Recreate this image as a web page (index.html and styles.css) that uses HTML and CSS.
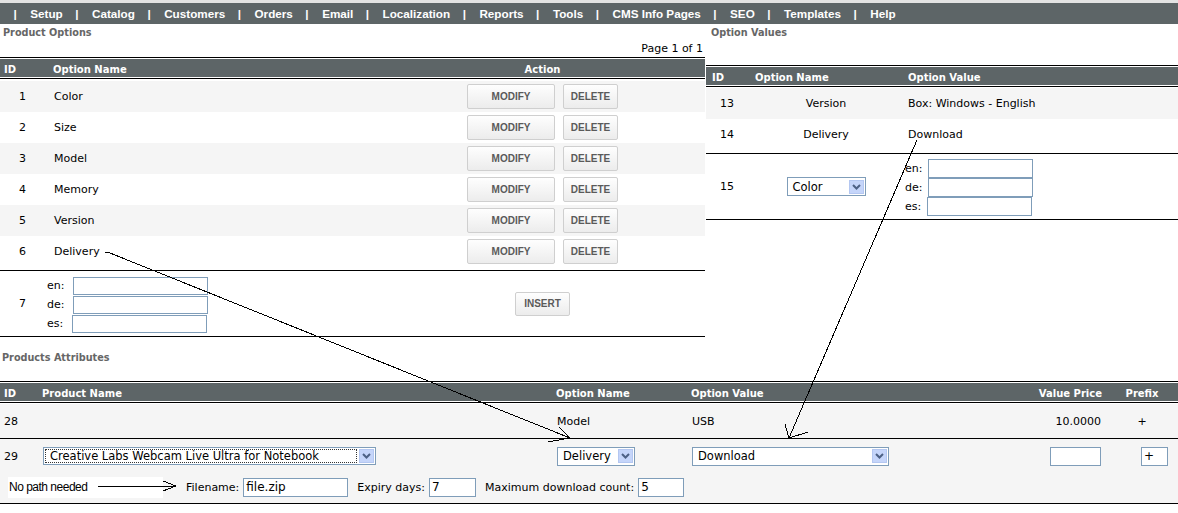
FILE: index.html
```html
<!DOCTYPE html>
<html>
<head>
<meta charset="utf-8">
<title>Product Options</title>
<link rel="stylesheet" href="styles.css">
</head>
<body>
<div class="page">
  <nav class="nav">
    <span class="sep">|</span><span class="item">Setup</span>
    <span class="sep">|</span><span class="item">Catalog</span>
    <span class="sep">|</span><span class="item">Customers</span>
    <span class="sep">|</span><span class="item">Orders</span>
    <span class="sep">|</span><span class="item">Email</span>
    <span class="sep">|</span><span class="item">Localization</span>
    <span class="sep">|</span><span class="item">Reports</span>
    <span class="sep">|</span><span class="item">Tools</span>
    <span class="sep">|</span><span class="item">CMS Info Pages</span>
    <span class="sep">|</span><span class="item">SEO</span>
    <span class="sep">|</span><span class="item">Templates</span>
    <span class="sep">|</span><span class="item">Help</span>
  </nav>

  <div class="main">
    <section class="left">
      <h2 class="title title-left">Product Options</h2>
      <div class="pager">Page 1 of 1</div>
      <div class="thead opt-grid">
        <span class="h-id">ID</span>
        <span class="h-name">Option Name</span>
        <span class="h-act">Action</span>
      </div>
      <div class="rows rows-left">
        <div class="row opt-grid alt"><span class="d-id">1</span><span class="d-name">Color</span><span class="d-act"><button class="btn btn-mod">MODIFY</button><button class="btn btn-del">DELETE</button></span></div>
        <div class="row opt-grid"><span class="d-id">2</span><span class="d-name">Size</span><span class="d-act"><button class="btn btn-mod">MODIFY</button><button class="btn btn-del">DELETE</button></span></div>
        <div class="row opt-grid alt"><span class="d-id">3</span><span class="d-name">Model</span><span class="d-act"><button class="btn btn-mod">MODIFY</button><button class="btn btn-del">DELETE</button></span></div>
        <div class="row opt-grid"><span class="d-id">4</span><span class="d-name">Memory</span><span class="d-act"><button class="btn btn-mod">MODIFY</button><button class="btn btn-del">DELETE</button></span></div>
        <div class="row opt-grid alt"><span class="d-id">5</span><span class="d-name">Version</span><span class="d-act"><button class="btn btn-mod">MODIFY</button><button class="btn btn-del">DELETE</button></span></div>
        <div class="row opt-grid"><span class="d-id">6</span><span class="d-name">Delivery</span><span class="d-act"><button class="btn btn-mod">MODIFY</button><button class="btn btn-del">DELETE</button></span></div>
      </div>
      <div class="newrow opt-grid">
        <span class="d-id">7</span>
        <div class="langs langs-left">
          <div class="lang"><span>en:</span><input class="in in-opt" type="text"></div>
          <div class="lang"><span>de:</span><input class="in in-opt" type="text"></div>
          <div class="lang"><span>es:</span><input class="in in-opt" type="text"></div>
        </div>
        <span class="d-act"><button class="btn btn-ins">INSERT</button></span>
      </div>
    </section>

    <section class="right">
      <h2 class="title title-right">Option Values</h2>
      <div class="thead val-grid">
        <span class="vh-id">ID</span>
        <span class="vh-name">Option Name</span>
        <span class="vh-val">Option Value</span>
      </div>
      <div class="rows rows-right">
        <div class="row val-grid alt"><span class="vd-id">13</span><span class="vd-name">Version</span><span class="vd-val">Box: Windows - English</span></div>
        <div class="row val-grid"><span class="vd-id">14</span><span class="vd-name">Delivery</span><span class="vd-val">Download</span></div>
      </div>
      <div class="newrow newrow-right val-grid">
        <span class="vd-id">15</span>
        <span class="vd-name"><span class="sel sel-color"><span class="sel-text">Color</span><span class="arr"><svg width="15" height="14" viewBox="0 0 15 14"><rect x="0.5" y="0.5" width="14" height="13" fill="#c5d5fa" stroke="#b4c7f1"/><polyline points="4,5 7.5,8.5 11,5" fill="none" stroke="#4d6185" stroke-width="2"/></svg></span></span></span>
        <div class="langs langs-right">
          <div class="lang"><span>en:</span><input class="in in-val" type="text"></div>
          <div class="lang"><span>de:</span><input class="in in-val" type="text"></div>
          <div class="lang"><span>es:</span><input class="in in-val" type="text"></div>
        </div>
      </div>
    </section>
  </div>

  <section class="attrs">
    <h2 class="title title-attrs">Products Attributes</h2>
    <div class="thead attr-grid">
      <span class="ah-l">ID</span>
      <span class="ah-l">Product Name</span>
      <span class="ah-l">Option Name</span>
      <span class="ah-l">Option Value</span>
      <span class="ah-r">Value Price</span>
      <span class="ah-c">Prefix</span>
    </div>
    <div class="arow arow-28 attr-grid">
      <span class="ad-id">28</span>
      <span class="ad-l"></span>
      <span class="ad-l">Model</span>
      <span class="ad-l">USB</span>
      <span class="ad-r">10.0000</span>
      <span class="ad-c">+</span>
    </div>
    <div class="arow arow-29">
      <div class="line1 attr-grid">
        <span class="ad-id">29</span>
        <span class="ad-l"><span class="sel sel-prod"><span class="focus">Creative Labs Webcam Live Ultra for Notebook</span><span class="arr"><svg width="15" height="14" viewBox="0 0 15 14"><rect x="0.5" y="0.5" width="14" height="13" fill="#c5d5fa" stroke="#b4c7f1"/><polyline points="4,5 7.5,8.5 11,5" fill="none" stroke="#4d6185" stroke-width="2"/></svg></span></span></span>
        <span class="ad-l"><span class="sel sel-opt"><span class="sel-text">Delivery</span><span class="arr"><svg width="15" height="14" viewBox="0 0 15 14"><rect x="0.5" y="0.5" width="14" height="13" fill="#c5d5fa" stroke="#b4c7f1"/><polyline points="4,5 7.5,8.5 11,5" fill="none" stroke="#4d6185" stroke-width="2"/></svg></span></span></span>
        <span class="ad-l"><span class="sel sel-val"><span class="sel-text">Download</span><span class="arr"><svg width="15" height="14" viewBox="0 0 15 14"><rect x="0.5" y="0.5" width="14" height="13" fill="#c5d5fa" stroke="#b4c7f1"/><polyline points="4,5 7.5,8.5 11,5" fill="none" stroke="#4d6185" stroke-width="2"/></svg></span></span></span>
        <span class="ad-r"><input class="in in-price" type="text"></span>
        <span class="ad-pre"><input class="in in-prefix" type="text" value="+"></span>
      </div>
      <div class="line2">
        <span class="note">No path needed</span>
        <span class="dl-label dl-first">Filename:</span><input class="in in-file" type="text" value="file.zip">
        <span class="dl-label">Expiry days:</span><input class="in in-days" type="text" value="7">
        <span class="dl-label">Maximum download count:</span><input class="in in-count" type="text" value="5">
      </div>
    </div>
  </section>

  <svg class="annot" width="1178" height="513" viewBox="0 0 1178 513">
    <g fill="none" stroke="#000" stroke-width="1" shape-rendering="crispEdges">
      <polyline points="105,252 110,253 570,438"/>
      <polyline points="559,427 570,438 548,442"/>
      <line x1="917" y1="140" x2="789" y2="438"/>
      <polyline points="785,424 789,438 808,432"/>
      <line x1="98" y1="486" x2="176" y2="486"/>
      <polyline points="163,481 176,486 163,491"/>
    </g>
  </svg>
</div>
</body>
</html>
```

FILE: styles.css
```css
* { box-sizing: border-box; }

body {
  margin: 0;
  font-family: "DejaVu Sans", Verdana, sans-serif;
  font-size: 11px;
  color: #000;
  background: #fff;
}

.page {
  position: relative;
  width: 1178px;
  height: 513px;
  overflow: hidden;
}

/* ---------- top navigation ---------- */
.nav {
  height: 24px;
  border-top: 3px solid #e3e3e3;
  background: #5d6567;
  color: #fff;
  font-family: "Liberation Sans", Arial, sans-serif;
  font-weight: bold;
  font-size: 11.7px;
  display: flex;
  align-items: center;
  padding-left: 1px;
  white-space: nowrap;
}
.sep { padding: 0 13.5px 0 12.5px; }

/* ---------- layout ---------- */
.main { display: flex; }
.left { width: 705px; }
.right { width: 472px; margin-left: 1px; }

.title {
  margin: 0;
  height: 17px;
  padding-top: 1px;
  line-height: 16px;
  font-size: 9.7px;
  font-weight: bold;
  color: #666;
}
.title-left { padding-left: 3px; }
.title-right { padding-left: 5px; }
.title-attrs { padding-left: 2px; margin-top: 12px; }

.pager {
  height: 16px;
  line-height: 16px;
  text-align: right;
  padding-right: 2px;
}

/* ---------- table header bar ---------- */
.thead {
  height: 22px;
  border-top: 1px solid #000;
  border-bottom: 1px solid #000;
  padding: 1px 0;
  background: #5d6567;
  background-clip: content-box;
  color: #fff;
  font-weight: bold;
  font-size: 10px;
  align-items: start;
}
.thead > span { padding-top: 4px; line-height: 14px; }

.row { height: 31px; align-items: center; }
.alt { background: #f5f5f5; }

.newrow {
  height: 67px;
  margin-top: 3px;
  border-top: 1px solid #000;
  border-bottom: 1px solid #000;
  align-items: center;
}

/* ---------- product options (left) ---------- */
.opt-grid { display: grid; grid-template-columns: 50px 330px 325px; }
.h-id { padding-left: 4px; }
.h-name { padding-left: 3px; }
.h-act { text-align: center; }
.rows-left { margin-top: 2px; }
.d-id { padding-left: 19px; }
.d-name { padding-left: 4px; }
.d-act { display: flex; justify-content: center; gap: 8px; }

.btn {
  height: 25px;
  padding: 0;
  border: 1px solid #cfcfcf;
  border-radius: 2px;
  background: linear-gradient(#fefefe, #ececec);
  color: #5a5a5a;
  font-family: "Liberation Sans", Arial, sans-serif;
  font-weight: bold;
  font-size: 10px;
}
.btn-mod { width: 88px; }
.btn-del { width: 55px; }
.btn-ins { width: 55px; height: 24px; }

.langs { display: flex; flex-direction: column; }
.langs-left { margin-left: -3px; padding-top: 2px; }
.lang { display: flex; align-items: center; height: 19px; }

.in {
  border: 1px solid #7f9db9;
  background: #fff;
  padding: 0 2px;
  margin: 0;
  font-family: "DejaVu Sans", Verdana, sans-serif;
  font-size: 12px;
  color: #000;
  outline: none;
}
.in-opt { width: 135px; height: 18px; margin-left: 8.5px; }
.in-val { width: 105px; height: 19px; margin-left: 5.5px; }

/* ---------- option values (right) ---------- */
.val-grid { display: grid; grid-template-columns: 44px 152px 276px; }
.right .thead { margin-top: 24px; }
.vh-id { padding-left: 6px; }
.vh-name { padding-left: 5px; }
.vh-val { padding-left: 6px; }
.rows-right { margin-top: 1px; }
.vd-id { padding-left: 14px; }
.vd-name { text-align: center; }
.vd-val { padding-left: 6px; }
.langs-right { padding-left: 3px; padding-top: 2px; }

/* ---------- fake select boxes ---------- */
.sel {
  display: inline-flex;
  align-items: center;
  justify-content: space-between;
  height: 19px;
  border: 1px solid #7f9db9;
  background: #fff;
  font-size: 11.5px;
  vertical-align: middle;
  text-align: left;
}
.sel-text { padding-left: 5px; }
.arr { display: flex; margin-right: 1px; }
.sel-color { width: 79px; }
.sel-opt { width: 78px; }
.sel-val { width: 197px; }
.sel-prod { width: 333px; height: 18px; }
.focus {
  flex: 1;
  margin: 1px 2px 1px 1px;
  height: 14px;
  line-height: 13px;
  border: 1px dotted #333;
  padding-left: 4px;
}

/* ---------- products attributes ---------- */
.attr-grid { display: grid; grid-template-columns: 38px 514px 135px 349px 70px 72px; align-items: center; }
.attrs .thead { margin-top: 15px; align-items: start; }
.ah-l { padding-left: 4px; }
.ah-r { text-align: right; padding-right: 4px; }
.ah-c { text-align: center; }

.arow { background: #f5f5f5; border-bottom: 1px solid #000; }
.arow-28 { height: 35px; margin-top: 1px; }
.arow-29 { height: 65px; }
.line1 { height: 34px; }
.ad-id { padding-left: 4px; }
.ad-l { padding-left: 5px; }
.ad-r { text-align: right; padding-right: 5px; display: flex; justify-content: flex-end; }
.ad-c { text-align: center; }
.ad-pre { padding-left: 35px; display: flex; }

.in-price { width: 51px; height: 19px; }
.in-prefix { width: 27px; height: 19px; }

.line2 {
  display: flex;
  align-items: center;
  height: 28px;
  padding-left: 8px;
}
.note {
  width: 155px;
  height: 21px;
  line-height: 21px;
  background: #fff;
  padding-left: 1px;
  font-family: "Liberation Sans", Arial, sans-serif;
  font-size: 12px;
  letter-spacing: -0.5px;
}
.dl-label { margin-left: 9px; }
.dl-first { margin-left: 23px; }
.line2 .in { margin-left: 4px; height: 19px; }
.in-file { width: 105px; }
.in-days { width: 47px; }
.in-count { width: 46px; }

/* ---------- hand-drawn annotation arrows ---------- */
.annot {
  position: absolute;
  left: 0;
  top: 0;
  pointer-events: none;
}
```
